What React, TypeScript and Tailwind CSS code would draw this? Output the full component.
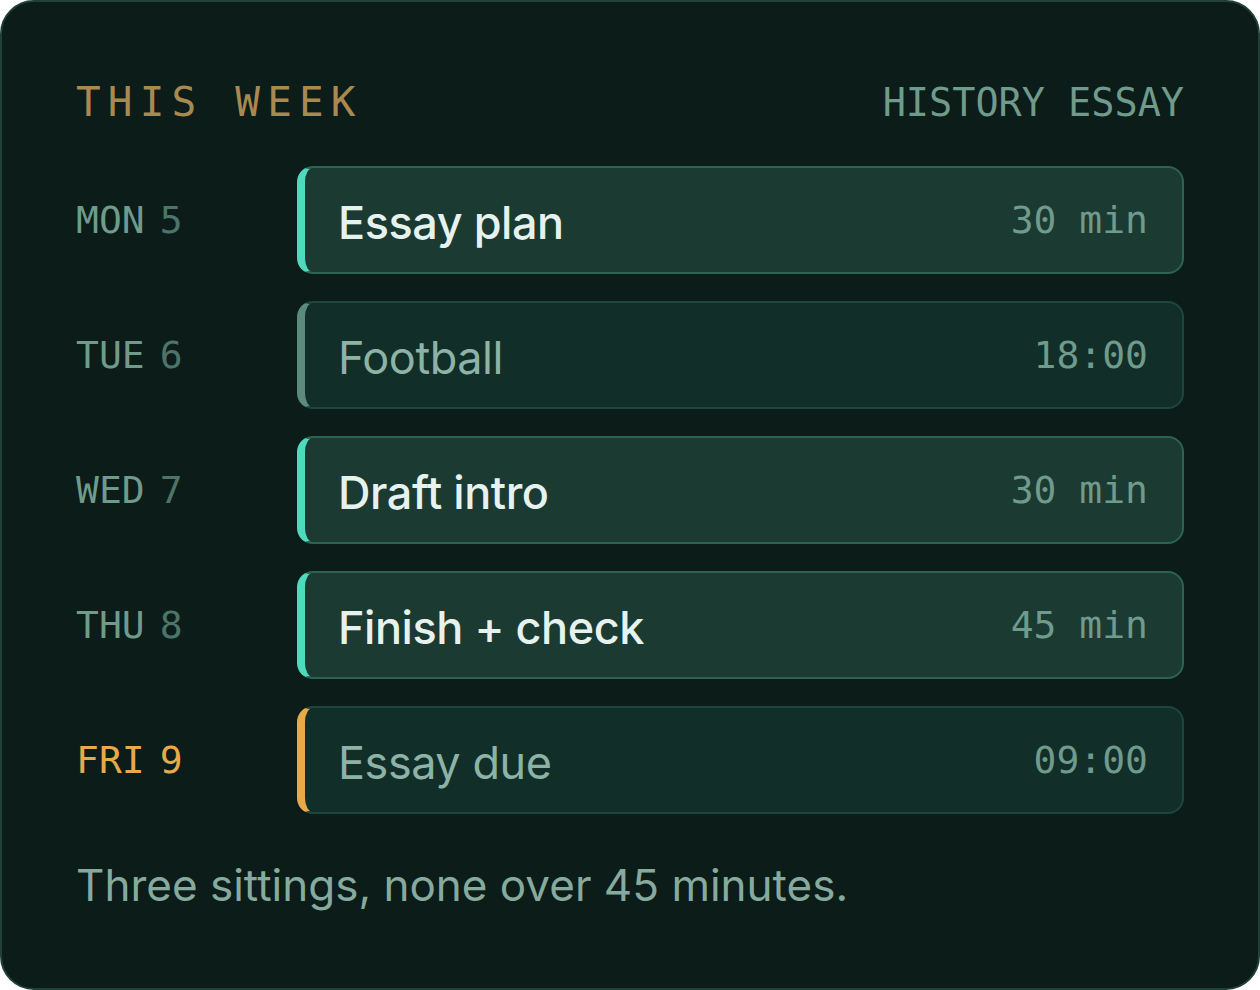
const mono = "font-['DejaVu_Sans_Mono',monospace]";
const sans = "font-['Inter','Noto_Sans',sans-serif]";

type Row = {
  day: string;
  num: string;
  title: string;
  meta: string;
  kind: 'session' | 'event' | 'due';
};

const ROWS: Row[] = [
  { day: 'MON', num: '5', title: 'Essay plan', meta: '30 min', kind: 'session' },
  { day: 'TUE', num: '6', title: 'Football', meta: '18:00', kind: 'event' },
  { day: 'WED', num: '7', title: 'Draft intro', meta: '30 min', kind: 'session' },
  { day: 'THU', num: '8', title: 'Finish + check', meta: '45 min', kind: 'session' },
  { day: 'FRI', num: '9', title: 'Essay due', meta: '09:00', kind: 'due' },
];

function DayRow({ row }: { row: Row }) {
  const isDue = row.kind === 'due';
  const isSession = row.kind === 'session';

  const cardClass = isSession
    ? 'bg-[#1a3a32] border-[#2d6353] border-l-[#4fd9bd]'
    : isDue
      ? 'bg-[#122e29] border-[#1f463c] border-l-[#e8a94a]'
      : 'bg-[#122e29] border-[#1f463c] border-l-[#5c8a7d]';

  return (
    <div className="flex items-center h-[108px]">
      {/* day label */}
      <div className={`${mono} w-[221px] shrink-0 text-[38px] leading-none flex gap-[15px]`}>
        <span className={isDue ? 'text-[#e8a94a]' : 'text-[#6f9a8c]'}>{row.day}</span>
        <span className={isDue ? 'text-[#e8a94a]' : 'text-[#4d7468]'}>{row.num}</span>
      </div>

      {/* item card */}
      <div
        className={`flex-1 h-full flex items-center justify-between rounded-[16px] border-2 border-l-[8px] pl-[33px] pr-[34px] ${cardClass}`}
      >
        <span
          className={`${sans} text-[45px] leading-none tracking-[-0.01em] pt-[4px] ${
            isSession ? 'font-medium text-[#e6f2ee]' : 'font-normal text-[#8db3a7]'
          }`}
        >
          {row.title}
        </span>
        <span className={`${mono} text-[38px] leading-none text-[#6f9a8c]`}>{row.meta}</span>
      </div>
    </div>
  );
}

export default function App() {
  return (
    <div className="w-[1260px] h-[990px] bg-white">
      <div className="w-full h-full bg-[#0b1c19] border-2 border-[#1f4137] rounded-[34px] px-[74px] pt-[80px] flex flex-col">
        {/* header */}
        <div className={`${mono} flex items-baseline justify-between leading-none h-[42px]`}>
          <span className="text-[41px] tracking-[0.175em] text-[#a88a50]">THIS WEEK</span>
          <span className="text-[38.5px] text-[#6f9a8c]">HISTORY ESSAY</span>
        </div>

        {/* week list */}
        <div className="mt-[42px] flex flex-col gap-[27px]">
          {ROWS.map(r => (
            <DayRow key={r.day} row={r} />
          ))}
        </div>

        <p className={`${sans} mt-[49px] text-[44px] leading-none text-[#86aa9e]`}>
          Three sittings, none over 45 minutes.
        </p>
      </div>
    </div>
  );
}
